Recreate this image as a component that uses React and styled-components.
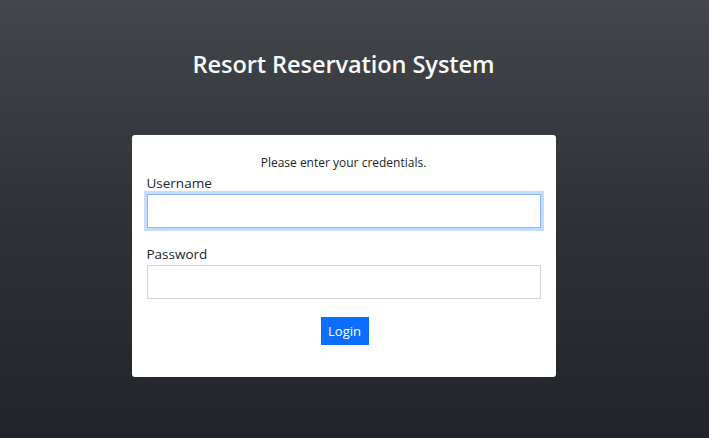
import styled, { createGlobalStyle } from "styled-components";

const GlobalStyle = createGlobalStyle`
  html, body {
    margin: 0;
    padding: 0;
  }
  body {
    font-family: "Open Sans", "Noto Sans", sans-serif;
  }
`;

const Page = styled.div`
  width: 100%;
  min-height: 100vh;
  background: linear-gradient(180deg, #43474c 0%, #2e3236 50%, #212529 100%);
  display: flex;
  flex-direction: column;
  align-items: center;
  box-sizing: border-box;
  padding: 47px 22px 0 0;
`;

const Title = styled.h1`
  margin: 0;
  color: #f8f9fa;
  font-size: 23.6px;
  font-weight: 600;
  line-height: 34px;
  letter-spacing: -0.1px;
`;

const Card = styled.div`
  margin-top: 54px;
  width: 424px;
  box-sizing: border-box;
  background: #fff;
  border-radius: 3px;
  padding: 18px 15px 32px 15px;
  display: flex;
  flex-direction: column;
`;

const Hint = styled.p`
  margin: 0 0 1px;
  text-align: center;
  font-size: 12px;
  line-height: 20px;
  color: #212529;
`;

const Field = styled.div`
  display: flex;
  flex-direction: column;
  margin-bottom: ${(p) => p.$gap || 0}px;
`;

const Label = styled.label`
  font-size: 13.5px;
  line-height: 18px;
  color: #212529;
  margin-bottom: 2px;
`;

const Input = styled.input`
  height: 34px;
  box-sizing: border-box;
  border: 1px solid ${(p) => (p.$focus ? "#86b7fe" : "#ced4da")};
  box-shadow: ${(p) => (p.$focus ? "0 0 0 3px #c6dcfd" : "none")};
  outline: none;
  font-size: 14px;
  padding: 4px 8px;
  background: #fff;
`;

const Actions = styled.div`
  display: flex;
  justify-content: center;
  margin-top: 18px;
`;

const Button = styled.button`
  background: #0d6efd;
  color: #fff;
  border: none;
  border-radius: 0;
  font-family: inherit;
  font-size: 13px;
  width: 48px;
  height: 28px;
  padding: 0;
  margin-left: 2px;
  cursor: pointer;
`;

const App = () => {
  return (
    <>
      <GlobalStyle />
      <Page>
        <Title>Resort Reservation System</Title>
        <Card>
          <Hint>Please enter your credentials.</Hint>
          <Field $gap={17}>
            <Label>Username</Label>
            <Input type="text" $focus />
          </Field>
          <Field>
            <Label>Password</Label>
            <Input type="password" />
          </Field>
          <Actions>
            <Button>Login</Button>
          </Actions>
        </Card>
      </Page>
    </>
  );
};

export default App;
